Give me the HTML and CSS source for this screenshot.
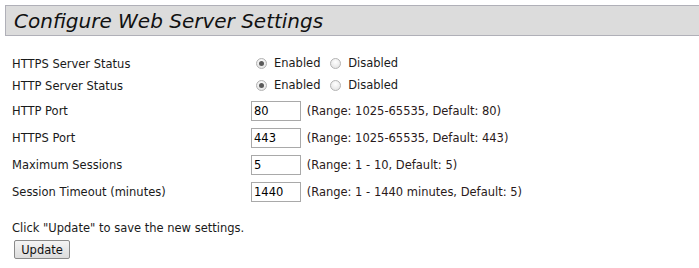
FILE: index.html
```html
<!DOCTYPE html>
<html lang="en">
<head>
    <meta charset="UTF-8">
    <title>Configure Web Server Settings</title>
    <link rel="stylesheet" href="styles.css">
</head>
<body>
    <div class="page-header">
        <h1>Configure Web Server Settings</h1>
    </div>

    <table class="settings">
        <tr class="radio-row">
            <td class="label">HTTPS Server Status</td>
            <td>
                <label class="opt"><input type="radio" name="https" checked> Enabled</label>
                <label class="opt"><input type="radio" name="https"> Disabled</label>
            </td>
        </tr>
        <tr class="radio-row">
            <td class="label">HTTP Server Status</td>
            <td>
                <label class="opt"><input type="radio" name="http" checked> Enabled</label>
                <label class="opt"><input type="radio" name="http"> Disabled</label>
            </td>
        </tr>
        <tr class="field-row">
            <td class="label">HTTP Port</td>
            <td><input type="text" class="num" value="80"> <span class="hint">(Range: 1025-65535, Default: 80)</span></td>
        </tr>
        <tr class="field-row">
            <td class="label">HTTPS Port</td>
            <td><input type="text" class="num" value="443"> <span class="hint">(Range: 1025-65535, Default: 443)</span></td>
        </tr>
        <tr class="field-row">
            <td class="label">Maximum Sessions</td>
            <td><input type="text" class="num" value="5"> <span class="hint">(Range: 1 - 10, Default: 5)</span></td>
        </tr>
        <tr class="field-row">
            <td class="label">Session Timeout (minutes)</td>
            <td><input type="text" class="num" value="1440"> <span class="hint">(Range: 1 - 1440 minutes, Default: 5)</span></td>
        </tr>
    </table>

    <p class="note">Click "Update" to save the new settings.</p>
    <button class="update-btn">Update</button>
</body>
</html>
```

FILE: styles.css
```css
* {
    margin: 0;
    padding: 0;
    box-sizing: border-box;
}

body {
    background: white;
    color: #1a1a1a;
    font-family: 'DejaVu Sans', Verdana, sans-serif;
    font-size: 11.5px;
}

.page-header {
    margin: 5px 0 0 5px;
    height: 31px;
    background: #dcdcdc;
    border-top: 1px solid #b0b0b8;
    border-bottom: 1px solid #b0b0b8;
    border-left: 1px solid #b0b0b8;
    padding-left: 8px;
    display: flex;
    align-items: center;
}

.page-header h1 {
    font-size: 20px;
    font-weight: normal;
    font-style: italic;
    color: #111;
}

.settings {
    margin: 17px 0 0 12px;
    border-collapse: collapse;
}

.settings td {
    padding: 0;
    vertical-align: middle;
}

.settings .label {
    width: 239px;
}

.radio-row td {
    height: 22px;
}

.field-row td {
    height: 27px;
}

.opt {
    display: inline-flex;
    align-items: center;
    margin-right: 1px;
}

.opt input {
    appearance: none;
    width: 11px;
    height: 11px;
    margin: 0 7px 0 5px;
    border-radius: 50%;
    border: 1px solid #b4b4b4;
    background: radial-gradient(circle at 50% 35%, #ffffff, #dedede);
    position: relative;
}

.opt input:checked::after {
    content: "";
    position: absolute;
    left: 2px;
    top: 2px;
    width: 5px;
    height: 5px;
    border-radius: 50%;
    background: #5a5a5a;
}

.num {
    width: 50px;
    height: 20px;
    border: 1px solid #a9a9a9;
    padding: 0 2px;
    font-family: inherit;
    font-size: 11.5px;
    color: #000;
    vertical-align: middle;
    margin-right: 2px;
}

.hint {
    color: #2a1a1a;
}

.note {
    margin: 16px 0 0 12px;
}

.update-btn {
    margin: 5px 0 0 14px;
    width: 56px;
    height: 19px;
    font-family: inherit;
    font-size: 11.5px;
    color: #111;
    background: linear-gradient(#f4f4f4, #dcdcdc);
    border: 1px solid #8a8a8a;
    border-radius: 2px;
}
```
